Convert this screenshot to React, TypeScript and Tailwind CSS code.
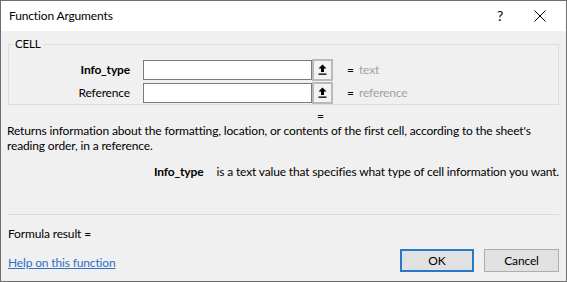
import React from 'react';

function RefButton() {
  return (
    <div className="flex h-[22px] w-[21px] items-center justify-center border-2 border-[#b9b9b9] bg-[#f3f3f3]">
      <svg width="9" height="11" viewBox="0 0 9 11">
        <path d="M4.5 0.5 L8.5 4.5 L6 4.5 L6 8 L3 8 L3 4.5 L0.5 4.5 Z" fill="#000" />
        <rect x="0.5" y="9.5" width="8" height="1.3" fill="#000" />
      </svg>
    </div>
  );
}

function ArgRow({ label, bold, value }: { label: string; bold?: boolean; value: string }) {
  return (
    <div className="flex h-[23px] items-center">
      <div className={`w-[124px] pr-[3px] text-right ${bold ? 'font-bold' : ''}`}>{label}</div>
      <div className="ml-[10px] h-[20px] w-[169px] border border-[#7a7a7a] bg-white" />
      <RefButton />
      <div className="ml-[14px] w-[12px]">=</div>
      <div className="text-[#a0a0a0]">{value}</div>
    </div>
  );
}

export default function App() {
  return (
    <div className="flex h-[282px] w-[567px] flex-col border border-[#6e6e6e] bg-[#f0f0f0] text-[12px] tracking-[-0.15px] leading-[16px] text-black font-['Lato',sans-serif]">
      <div className="flex h-[30px] shrink-0 items-center bg-white pl-[8px]">
        <div className="flex-1">Function Arguments</div>
        <div className="w-[20px] text-[14px] text-center">?</div>
        <div className="ml-[20px] mr-[16px] flex w-[20px] justify-center">
          <svg width="12" height="12" viewBox="0 0 12 12">
            <path d="M0.5 0.5 L11.5 11.5 M11.5 0.5 L0.5 11.5" stroke="#000" strokeWidth="1" />
          </svg>
        </div>
      </div>
      <div className="flex flex-1 flex-col px-[6px] pb-[9px]">
        <fieldset className="mt-[5px] mx-[1px] border border-[#dcdcdc] pb-[0px] pt-[6px]">
          <legend className="ml-[4px] px-[2px] text-[11.5px]">CELL</legend>
          <ArgRow label="Info_type" bold value="text" />
          <ArgRow label="Reference" value="reference" />
        </fieldset>
        <div className="mt-[5px] h-[12px] pl-[310px] leading-[12px]">=</div>
        <p className="mt-[1px] leading-[15px]">
          Returns information about the formatting, location, or contents of the first cell, according to the sheet's reading order, in a reference.
        </p>
        <div className="mt-[11px] flex justify-end pr-[1px]">
          <span className="mr-[13px] font-bold">Info_type</span>
          <span>is a text value that specifies what type of cell information you want.</span>
        </div>
        <div className="mt-[34px] mx-[1px] border-t border-[#d9d9d9]" />
        <div className="mt-[11px] pl-[1px]">Formula result =</div>
        <div className="mt-auto flex items-end">
          <a className="mb-[1px] pl-[1px] text-[#2f6fc4] underline flex-1" href="#">Help on this function</a>
          <button className="h-[23px] w-[74px] border-2 border-[#2a78c8] bg-[#e1e1e1]">OK</button>
          <button className="ml-[10px] mr-[1px] h-[23px] w-[75px] border border-[#adadad] bg-[#e1e1e1]">Cancel</button>
        </div>
      </div>
    </div>
  );
}
